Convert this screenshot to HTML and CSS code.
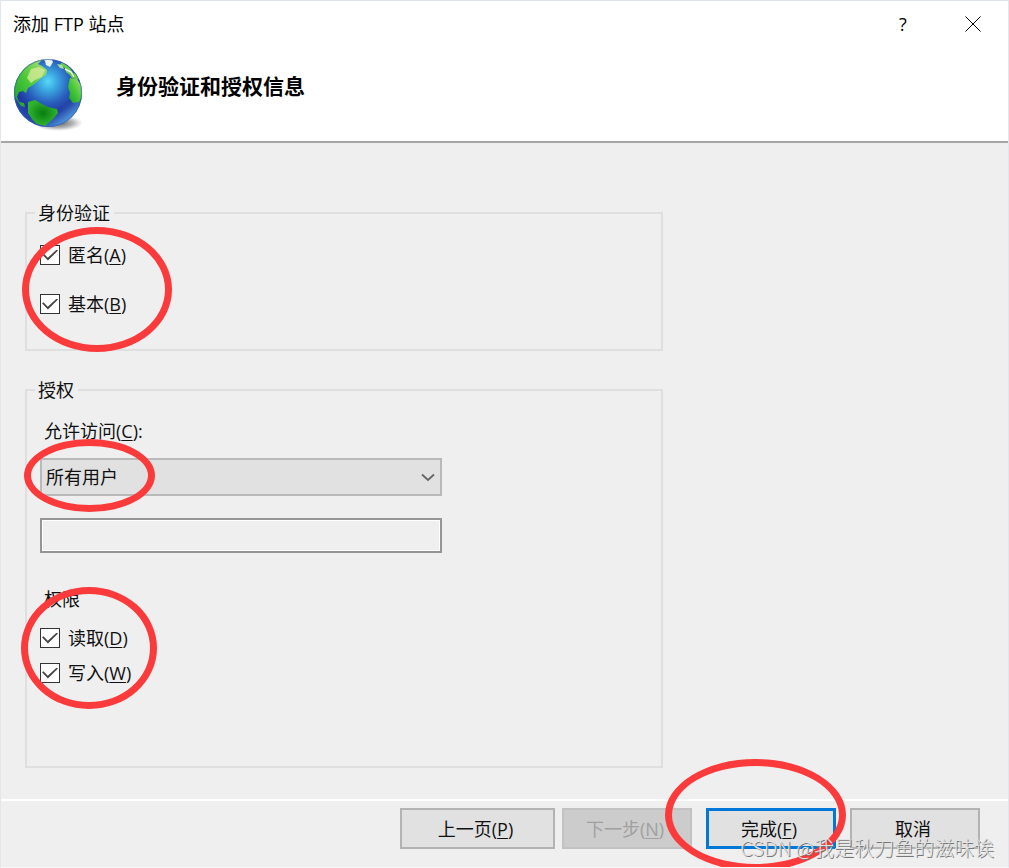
FILE: index.html
```html
<!DOCTYPE html>
<html lang="zh-CN">
<head>
<meta charset="utf-8">
<title>添加 FTP 站点</title>
<link rel="stylesheet" href="styles.css">
</head>
<body>
<main class="dialog">
  <header class="top">
    <div class="titlebar">
      <span class="title">添加 FTP 站点</span>
      <button class="caption-btn help" type="button" aria-label="帮助">?</button>
      <button class="caption-btn" type="button" aria-label="关闭">
        <svg width="16" height="16" viewBox="0 0 16 16"><path d="M.5.5l15 15M15.5.5l-15 15" stroke="#000" stroke-width="1" fill="none"/></svg>
      </button>
    </div>
    <div class="banner">
      <svg class="globe" width="72" height="76" viewBox="0 0 72 76" aria-hidden="true">
        <defs>
          <radialGradient id="sea" cx=".5" cy=".33" r=".66">
            <stop offset="0" stop-color="#5ad8f5"/><stop offset=".2" stop-color="#3ba8e2"/>
            <stop offset=".48" stop-color="#2960bd"/><stop offset=".72" stop-color="#2036a0"/><stop offset="1" stop-color="#2c50b4"/>
          </radialGradient>
          <radialGradient id="shade"><stop offset="0" stop-color="#444" stop-opacity=".9"/><stop offset=".6" stop-color="#777" stop-opacity=".55"/><stop offset="1" stop-color="#999" stop-opacity="0"/></radialGradient>
          <linearGradient id="north" x1="0" y1="1" x2="1" y2="0"><stop offset="0" stop-color="#159c28"/><stop offset=".5" stop-color="#4cc93a"/><stop offset="1" stop-color="#b5e080"/></linearGradient>
          <radialGradient id="south"><stop offset="0" stop-color="#087d12"/><stop offset="1" stop-color="#32b32e"/></radialGradient>
          <linearGradient id="glow" x1=".65" y1=".75" x2=".85" y2="1"><stop offset="0" stop-color="#6fdcff" stop-opacity="0"/><stop offset="1" stop-color="#6fdcff" stop-opacity=".8"/></linearGradient>
          <filter id="soft" x="-.1" y="-.1" width="1.2" height="1.2"><feGaussianBlur stdDeviation=".6"/></filter>
          <clipPath id="ball"><circle cx="36" cy="36" r="34"/></clipPath>
        </defs>
        <ellipse cx="46" cy="66" rx="25" ry="8" fill="url(#shade)"/>
        <circle cx="36" cy="36" r="34" fill="url(#sea)"/>
        <g clip-path="url(#ball)">
          <circle cx="36" cy="36" r="34" fill="url(#glow)"/>
          <g filter="url(#soft)">
            <path d="M0 36L3 22 12 9 24 2l6 1-4 4 4 2 5 4-1 5-5 3-3 3-5 4-5 3-2 5-3-2-4 1-2 5 2 5 5 1 1 4-4-1-5-7-2-5-2-3z" fill="url(#north)"/>
            <path d="M19 12l8-2 6 3-3 7-7 3-4 3-4-5z" fill="#dbec9a" opacity=".75"/>
            <path d="M30 2l9-1 2 4-3 5-4-2-1-4z" fill="#e9f3e8"/>
            <path d="M16 45l7-2 7 4 6 3 9 2 1 4-5 6-8 7-8-2-5-5-4-6z" fill="url(#south)"/>
            <path d="M58 21l7 1 5 7 1 8-4 8-6 1-4-5 1-5-2-6z" fill="url(#north)"/>
            <path d="M50 5l7 5 5 7-4 1-4-3-1-4-5-3zM57 17l7-1 4 7-8-2z" fill="#68cf45"/>
            <path d="M45 7l5 1 2 4-4-1z" fill="#a9dfab"/>
            <path d="M53 12l6 3 3 5" stroke="#effaf0" stroke-width="1.4" fill="none"/>
          </g>
        </g>
        <circle cx="36" cy="36" r="33.5" fill="none" stroke="#315fa8" opacity=".6"/>
      </svg>
      <h1 class="heading">身份验证和授权信息</h1>
    </div>
  </header>

  <form class="form">
    <fieldset class="group">
      <legend>身份验证</legend>
      <div class="stack wide">
        <label class="check"><input type="checkbox" checked><span>匿名(<u>A</u>)</span></label>
        <label class="check"><input type="checkbox" checked><span>基本(<u>B</u>)</span></label>
      </div>
      <i class="ring ring-auth"></i>
    </fieldset>

    <fieldset class="group access">
      <legend>授权</legend>
      <label class="caption" for="who">允许访问(<u>C</u>):</label>
      <div class="picker">
        <select id="who"><option>所有用户</option></select>
        <svg class="chevron" width="14" height="9" viewBox="0 0 14 9"><path d="M1 1.5l6 5.5 6-5.5" fill="none" stroke="#666" stroke-width="1.8"/></svg>
      </div>
      <input class="names" type="text" aria-label="用户或组" readonly>
      <div class="caption rights">权限</div>
      <div class="stack">
        <label class="check"><input type="checkbox" checked><span>读取(<u>D</u>)</span></label>
        <label class="check"><input type="checkbox" checked><span>写入(<u>W</u>)</span></label>
      </div>
      <i class="ring ring-user"></i>
      <i class="ring ring-rights"></i>
    </fieldset>
  </form>

  <footer class="actions">
    <button class="btn prev" type="button">上一页(<u>P</u>)</button>
    <button class="btn next" type="button" disabled>下一步(<u>N</u>)</button>
    <span class="finish">
      <button class="btn primary" type="button">完成(<u>F</u>)</button>
      <i class="ring ring-finish"></i>
    </span>
    <button class="btn" type="button">取消</button>
    <span class="watermark">CSDN @我是秋刀鱼的滋味诶</span>
  </footer>
</main>
</body>
</html>
```

FILE: styles.css
```css
* { box-sizing: border-box; }

body {
  margin: 0;
  background: #efefef;
  color: #111;
  font: 18px/26px "Open Sans", "Noto Sans CJK SC", sans-serif;
}

button, input, select { font: inherit; color: inherit; }
u { text-underline-offset: 2px; text-decoration-thickness: 1px; }

.dialog {
  display: flex;
  flex-direction: column;
  min-height: 100vh;
  overflow: hidden;
  border: 1px solid #e3e6ea;
  border-top-color: #dfe4ea;
  border-bottom-color: #f8f8f8;
}

.top {
  background: #fff;
  border-bottom: 2px solid #a6a6a6;
}

.titlebar {
  display: flex;
  align-items: center;
  height: 46px;
  padding: 0 0 0 12px;
}
.title { flex: 1; color: #000; }

.caption-btn {
  display: grid;
  place-items: center;
  width: 70px;
  height: 46px;
  padding: 0;
  border: 0;
  background: none;
  color: #000;
}

.banner {
  display: flex;
  align-items: flex-start;
  gap: 32px;
  height: 94px;
  padding: 10px 11px 0;
}
.globe { display: block; }
.heading {
  margin: 15px 0 0;
  font-size: 21px;
  line-height: 28px;
  font-weight: 700;
  color: #000;
}

.form {
  flex: 1;
  display: flex;
  flex-direction: column;
  gap: 26px;
  padding: 57px 24px 31px;
}

.group {
  position: relative;
  width: 100%;
  max-width: 638px;
  min-width: 0;
  margin: 0;
  padding: 16px 13px 32px;
  border: 2px solid #dfdfdf;
}
.group legend { margin-left: -5px; padding: 0 4px 0 3px; }
.access { padding: 15px 13px 80px; }

.stack { display: flex; flex-direction: column; align-items: flex-start; gap: 9px; }
.stack.wide { gap: 23px; }

.check { display: flex; align-items: center; gap: 8px; }
.check input {
  appearance: none;
  display: grid;
  place-items: center;
  width: 20px;
  height: 20px;
  margin: 0;
  border: 1px solid #333;
  background: #fff;
}
.check input:checked::before {
  content: "";
  width: 16px;
  height: 11px;
  background: #444;
  clip-path: polygon(0 44%, 9% 34%, 36% 76%, 92% 0, 100% 10%, 37% 100%);
}

.caption { display: block; padding-left: 4px; }

.picker { position: relative; max-width: 402px; margin-top: 14px; }
.picker select {
  appearance: none;
  display: block;
  width: 100%;
  height: 38px;
  padding: 0 32px 0 4px;
  border: 2px solid #b9b9b9;
  border-radius: 0;
  background: #e1e1e1;
}
.chevron { position: absolute; right: 7px; top: 15px; pointer-events: none; }

.names {
  display: block;
  width: 100%;
  max-width: 402px;
  height: 35px;
  margin-top: 22px;
  border: 2px solid #959595;
  border-radius: 0;
  background: #efefef;
  box-shadow: inset 0 0 0 1px #fff;
}
.rights { margin: 33px 0 13px; }

.actions {
  position: relative;
  display: flex;
  justify-content: flex-end;
  gap: 14px;
  padding: 7px 28px 18px;
  border-top: 2px solid #fff;
}
.btn {
  width: 130px;
  height: 41px;
  padding: 0 4px 0 0;
  border: 2px solid #b3b3b3;
  background: #e1e1e1;
}
.prev { width: 155px; margin-right: -7px; }
.next { background: #cccccc; border-color: #c2c2c2; color: #a0a0a0; }
.primary { border: 3px solid #0078d7; }
.finish { position: relative; display: flex; }

.ring {
  position: absolute;
  border: 7px solid #fb3b3b;
  border-radius: 50%;
  pointer-events: none;
}
.ring-auth { left: -5px; top: 1px; width: 150px; height: 125px; }
.ring-user { left: -3px; top: 36px; width: 131px; height: 73px; }
.ring-rights { left: -6px; top: 184px; width: 136px; height: 122px; }
.ring-finish { left: -41px; top: -49px; width: 181px; height: 112px; }

.watermark {
  position: absolute;
  right: 14px;
  bottom: 4px;
  font: 300 20px/30px "Noto Sans CJK SC", sans-serif;
  color: #e2e2e2;
  text-shadow: 1px 1px 0 #777;
  white-space: nowrap;
  pointer-events: none;
}
```
